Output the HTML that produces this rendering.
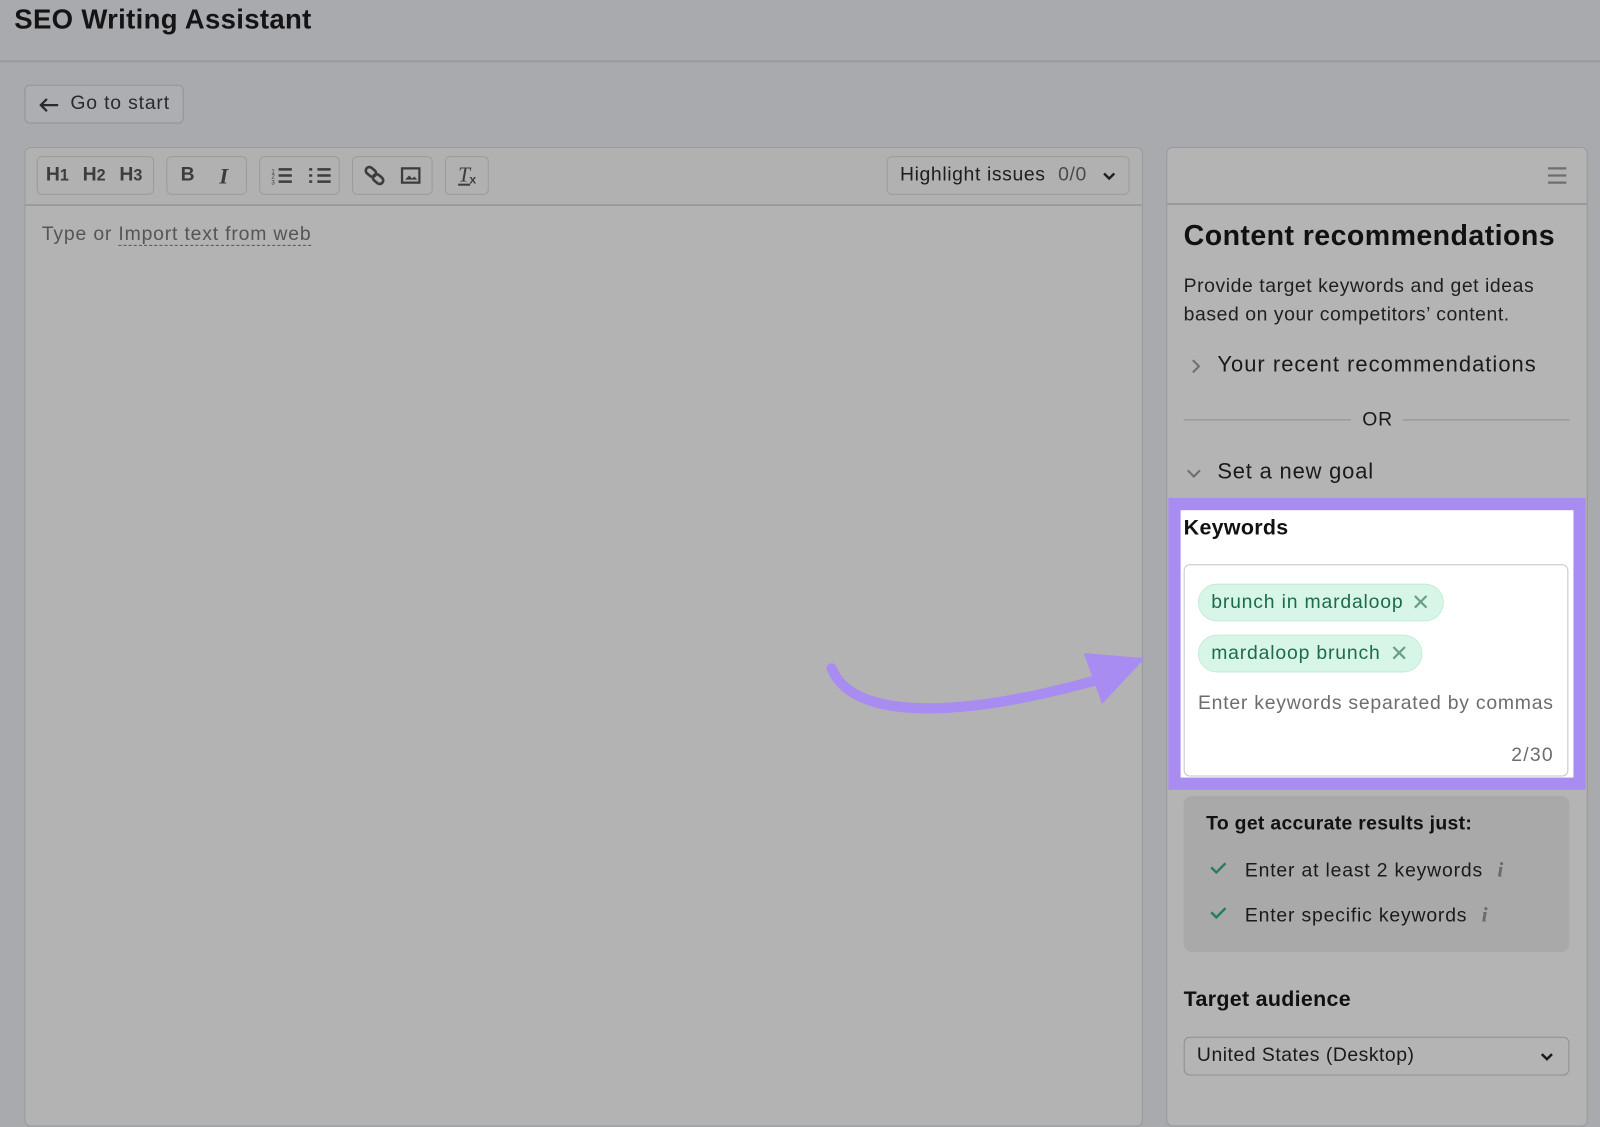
<!DOCTYPE html>
<html><head><meta charset="utf-8"><style>
html,body{margin:0;padding:0;width:1600px;height:1087px;overflow:hidden;background:#a9aaae;font-family:"Liberation Sans",sans-serif;}
#w{position:absolute;left:0;top:0;width:1568px;height:1066px;transform:scale(1.0204);transform-origin:0 0;letter-spacing:0.8px;}
.a{position:absolute;}
.btn{position:absolute;border:1px solid #929396;border-radius:5px;background:#adaeb1;box-sizing:border-box;}
.tb{position:absolute;top:153px;height:38px;border:1px solid #9b9b9c;border-radius:5px;box-sizing:border-box;color:#3d3d3e;font-size:19px;letter-spacing:0;}
</style></head><body><div id="w">
<div class="a" style="left:14px;top:4px;font-size:27px;font-weight:bold;color:#141416;letter-spacing:0.3px">SEO Writing Assistant</div>
<div class="a" style="left:0;top:59px;width:1568px;height:2px;background:#97989b"></div>
<div class="btn" style="left:24px;top:83px;width:156px;height:38px;font-size:19px;color:#2a2a2c;">
<svg class="a" style="left:12px;top:11px" width="22" height="16" viewBox="0 0 22 16"><path d="M20 8H3M9 2L3 8l6 6" stroke="#2a2a2c" stroke-width="2.2" fill="none"/></svg>
<span class="a" style="left:44px;top:7px">Go to start</span></div>
<!-- editor -->
<div class="a" style="left:24px;top:144px;width:1096px;height:960px;border:1px solid #98999b;border-radius:6px;background:#b3b3b3;box-sizing:border-box;"></div>
<div class="a" style="left:25px;top:145px;width:1094px;height:55px;background:#b1b1b2;border-bottom:2px solid #98999b;border-radius:6px 6px 0 0"></div>
<div class="tb" style="left:36px;width:115px;font-weight:bold"><span class="a" style="left:8px;top:7px">H<small>1</small></span><span class="a" style="left:44px;top:7px">H<small>2</small></span><span class="a" style="left:80px;top:7px">H<small>3</small></span></div>
<div class="tb" style="left:163px;width:79px"><b class="a" style="left:13px;top:7px">B</b><i class="a" style="left:51px;top:6px;font-family:'Liberation Serif';font-size:22px;font-weight:bold">I</i></div>
<div class="tb" style="left:254px;width:79px"><svg class="a" style="left:10px;top:8px" width="60" height="20"><g stroke="#3d3d3e" stroke-width="2.4"><path d="M8 4h13M8 10h13M8 16h13M46 4h13M46 10h13M46 16h13"/><path d="M38 4h3M38 10h3M38 16h3"/></g><text x="1" y="8" font-size="6" fill="#3d3d3e">1</text><text x="1" y="13" font-size="6" fill="#3d3d3e">2</text><text x="1" y="19" font-size="6" fill="#3d3d3e">3</text></svg></div>
<div class="tb" style="left:345px;width:79px"><svg class="a" style="left:10px;top:8px" width="60" height="22"><g stroke="#3d3d3e" stroke-width="2.6" fill="none"><rect x="2" y="3" width="11" height="7" rx="3.5" transform="rotate(40 7.5 6.5)"/><rect x="9" y="10" width="11" height="7" rx="3.5" transform="rotate(40 14.5 13.5)"/></g><rect x="38" y="3" width="17" height="14" stroke="#3d3d3e" stroke-width="2.2" fill="none"/><path d="M41 14l4-4 3 3 2-2 3 3z" fill="#3d3d3e"/></svg></div>
<div class="tb" style="left:436px;width:43px"><i class="a" style="left:12px;top:5px;font-family:'Liberation Serif';font-size:21px;text-decoration:underline">T</i><span class="a" style="left:23px;top:15px;font-size:12px;font-weight:bold">x</span></div>
<div class="tb" style="left:869px;width:238px;letter-spacing:0.6px"><span class="a" style="left:12px;top:7px;color:#1e1e20">Highlight issues</span><span class="a" style="left:167px;top:7px;color:#4a4a4c">0/0</span><svg class="a" style="left:210px;top:14px" width="14" height="10"><path d="M2 2l5 5 5-5" stroke="#1e1e20" stroke-width="2.4" fill="none"/></svg></div>
<div class="a" style="left:41px;top:219px;font-size:19px;color:#555557">Type or <span style="border-bottom:1px dashed #555557">Import text from web</span></div>
<!-- arrow -->
<svg class="a" style="left:790px;top:620px" width="350" height="100" viewBox="790 620 350 100"><path d="M815 655c20 50 120 50 258 12" stroke="#a98cf2" stroke-width="10" fill="none" stroke-linecap="round"/><path d="M1062 640L1122 645 1080 690z" fill="#a98cf2"/></svg>
<!-- right panel -->
<div class="a" style="left:1143px;top:144px;width:413px;height:960px;border:1px solid #98999b;border-radius:6px;background:#b4b4b4;box-sizing:border-box;"></div>
<div class="a" style="left:1144px;top:199px;width:411px;height:2px;background:#98999b"></div>
<svg class="a" style="left:1516px;top:163px" width="20" height="18"><path d="M1 2h18M1 9h18M1 16h18" stroke="#6e6e70" stroke-width="2.2"/></svg>
<div class="a" style="left:1160px;top:215px;font-size:28px;font-weight:bold;color:#111;letter-spacing:0.4px">Content recommendations</div>
<div class="a" style="left:1160px;top:267px;font-size:19px;line-height:28px;color:#1f1f20;letter-spacing:0.55px">Provide target keywords and get ideas<br>based on your competitors’ content.</div>
<svg class="a" style="left:1166px;top:350px" width="12" height="18"><path d="M3 3l6 6-6 6" stroke="#6e6e70" stroke-width="2" fill="none"/></svg>
<div class="a" style="left:1193px;top:345px;font-size:21.5px;color:#1a1a1b;letter-spacing:1px">Your recent recommendations</div>
<div class="a" style="left:1160px;top:411px;width:164px;height:1px;background:#8d8d8f"></div>
<div class="a" style="left:1375px;top:411px;width:163px;height:1px;background:#8d8d8f"></div>
<div class="a" style="left:1335px;top:401px;font-size:19px;color:#1a1a1b">OR</div>
<svg class="a" style="left:1161px;top:457px" width="18" height="14"><path d="M3 4l6 6 6-6" stroke="#6e6e70" stroke-width="2" fill="none"/></svg>
<div class="a" style="left:1193px;top:450px;font-size:21.5px;color:#1a1a1b">Set a new goal</div>
<!-- purple box -->
<div class="a" style="left:1145px;top:488px;width:409px;height:286px;background:#a98cf2"></div>
<div class="a" style="left:1157px;top:500px;width:385px;height:262px;background:#fff"></div>
<div class="a" style="left:1160px;top:506px;font-size:21px;font-weight:bold;color:#111;letter-spacing:0.3px">Keywords</div>
<div class="a" style="left:1160px;top:553px;width:377px;height:208px;border:1px solid #c6c6c8;border-radius:6px;box-sizing:border-box;background:#fff"></div>
<div class="a" style="left:1174px;top:572px;width:241px;height:37px;border-radius:19px;background:#d7f6e7;border:1px solid #c5ecd8;box-sizing:border-box;font-size:19px;color:#1d6b4c"><span class="a" style="left:12px;top:7px">brunch in mardaloop</span><span class="a" style="left:208px;top:5px;color:#6b9e88;font-size:22px">✕</span></div>
<div class="a" style="left:1174px;top:622px;width:220px;height:37px;border-radius:19px;background:#d7f6e7;border:1px solid #c5ecd8;box-sizing:border-box;font-size:19px;color:#1d6b4c"><span class="a" style="left:12px;top:7px">mardaloop brunch</span><span class="a" style="left:187px;top:5px;color:#6b9e88;font-size:22px">✕</span></div>
<div class="a" style="left:1174px;top:679px;font-size:19px;color:#6d6d70;letter-spacing:0.75px">Enter keywords separated by commas</div>
<div class="a" style="left:1481px;top:730px;font-size:19px;color:#6d6d70;letter-spacing:1.2px">2/30</div>
<!-- tips -->
<div class="a" style="left:1160px;top:780px;width:378px;height:153px;background:#a9a9aa;border-radius:8px"></div>
<div class="a" style="left:1182px;top:797px;font-size:19px;font-weight:bold;color:#111;letter-spacing:0.3px">To get accurate results just:</div>
<svg class="a" style="left:1185px;top:843px" width="18" height="14"><path d="M2 7l5 5 9-9" stroke="#2a7d5c" stroke-width="2.4" fill="none"/></svg>
<div class="a" style="left:1220px;top:840px;font-size:19px;color:#1a1a1b">Enter at least 2 keywords <i style="font-family:'Liberation Serif';color:#6a6a6c;margin-left:8px;font-weight:bold;font-size:21px">i</i></div>
<svg class="a" style="left:1185px;top:887px" width="18" height="14"><path d="M2 7l5 5 9-9" stroke="#2a7d5c" stroke-width="2.4" fill="none"/></svg>
<div class="a" style="left:1220px;top:884px;font-size:19px;color:#1a1a1b">Enter specific keywords <i style="font-family:'Liberation Serif';color:#6a6a6c;margin-left:8px;font-weight:bold;font-size:21px">i</i></div>
<div class="a" style="left:1160px;top:968px;font-size:21px;font-weight:bold;color:#111;letter-spacing:0.3px">Target audience</div>
<div class="a" style="left:1160px;top:1016px;width:378px;height:38px;border:1px solid #8f8f91;border-radius:6px;box-sizing:border-box;font-size:19px;color:#1a1a1b"><span class="a" style="left:12px;top:7px;letter-spacing:0.5px">United States (Desktop)</span><svg class="a" style="left:348px;top:14px" width="14" height="10"><path d="M2 2l5 5 5-5" stroke="#1a1a1b" stroke-width="2.4" fill="none"/></svg></div>
</div></body></html>
